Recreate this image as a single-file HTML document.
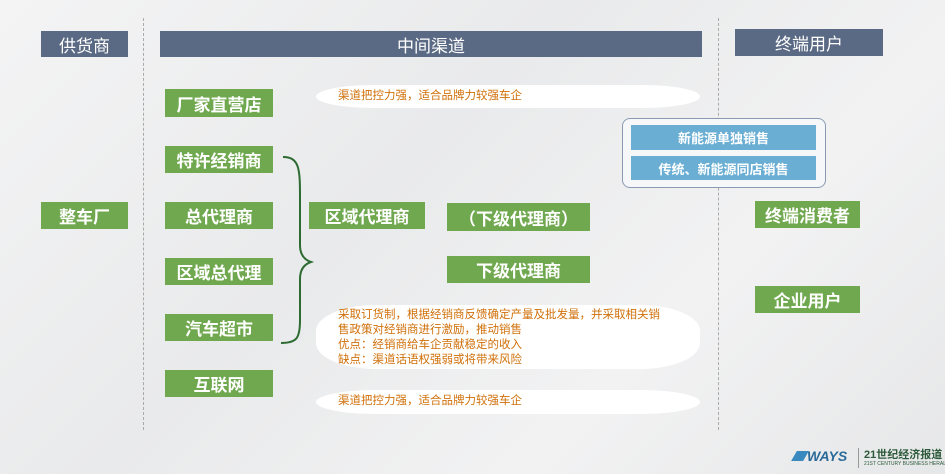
<!DOCTYPE html>
<html><head><meta charset="utf-8"><style>
*{margin:0;padding:0;box-sizing:border-box}
body{width:945px;height:474px;overflow:hidden;background:linear-gradient(135deg,#f4f4f5 0%,#e9eaeb 40%,#f2f2f3 70%,#e6e7e8 100%);font-family:"Liberation Sans","Noto Sans CJK SC",sans-serif;position:relative}
.a{position:absolute;white-space:nowrap}
.h{background:#5b6a84;color:#fff;font-size:17px;display:flex;align-items:center;justify-content:center}
.g{background:#70a84f;color:#fff;font-size:17px;font-weight:bold;display:flex;align-items:center;justify-content:center}
.b{background:#6aaed3;color:#fff;font-size:13px;font-weight:bold;display:flex;align-items:center;justify-content:center}
.w{background:#fff;border-radius:60px/12px;color:#d0700a;font-size:11.5px;line-height:15px}
.d{border-left:1px dashed #aaa;width:0}
</style></head><body>
<div class="a d" style="left:143px;top:18px;height:412px"></div>
<div class="a d" style="left:718px;top:18px;height:412px"></div>
<div class="a h" style="left:41px;top:31px;width:87px;height:26px">供货商</div>
<div class="a h" style="left:160px;top:31px;width:542px;height:26px">中间渠道</div>
<div class="a h" style="left:735px;top:29px;width:148px;height:27px">终端用户</div>

<div class="a g" style="left:165px;top:89px;width:108px;height:28px">厂家直营店</div>
<div class="a g" style="left:165px;top:146px;width:108px;height:27px">特许经销商</div>
<div class="a g" style="left:165px;top:202px;width:108px;height:27px">总代理商</div>
<div class="a g" style="left:165px;top:258px;width:108px;height:27px">区域总代理</div>
<div class="a g" style="left:165px;top:314px;width:108px;height:27px">汽车超市</div>
<div class="a g" style="left:165px;top:370px;width:108px;height:27px">互联网</div>
<div class="a g" style="left:41px;top:202px;width:87px;height:27px">整车厂</div>
<div class="a g" style="left:309px;top:202px;width:116px;height:27px">区域代理商</div>
<div class="a g" style="left:447px;top:203px;width:143px;height:28px">（下级代理商）</div>
<div class="a g" style="left:447px;top:256px;width:143px;height:27px">下级代理商</div>
<div class="a g" style="left:755px;top:201px;width:105px;height:27px">终端消费者</div>
<div class="a g" style="left:755px;top:286px;width:105px;height:27px">企业用户</div>

<div class="a" style="left:622px;top:118px;width:204px;height:70px;border:1.5px solid #8a9ab5;border-radius:8px;background:#f6f7f9"></div>
<div class="a b" style="left:631px;top:125px;width:185px;height:25px">新能源单独销售</div>
<div class="a b" style="left:631px;top:156px;width:185px;height:24px">传统、新能源同店销售</div>

<div class="a w" style="left:316px;top:85px;width:384px;height:23px;padding:4px 0 0 22px">渠道把控力强，适合品牌力较强车企</div>
<div class="a w" style="left:316px;top:305px;width:384px;height:64px;padding:3px 0 0 22px;border-radius:60px/26px">采取订货制，根据经销商反馈确定产量及批发量，并采取相关销<br>售政策对经销商进行激励，推动销售<br>优点：经销商给车企贡献稳定的收入<br>缺点：渠道话语权强弱或将带来风险</div>
<div class="a w" style="left:316px;top:390px;width:384px;height:24px;padding:4px 0 0 22px">渠道把控力强，适合品牌力较强车企</div>

<svg class="a" style="left:275px;top:150px" width="45" height="200"><path d="M8 7 C25 7 25 20 25 50 L25 95 C25 105 30 110 36 112 C30 114 25 119 25 129 L25 170 C25 188 22 193 6 193" fill="none" stroke="#2e6b32" stroke-width="2"/></svg>

<div class="a" style="left:807px;top:448px;font-size:14px;font-weight:bold;font-style:italic;color:#2a6a9a">WAYS</div>
<div class="a" style="left:794px;top:451px;width:12px;height:10px;background:#3a8ac0;transform:skewX(-30deg)"></div>
<div class="a" style="left:858px;top:448px;width:1px;height:20px;background:#999"></div>
<div class="a" style="left:864px;top:446px;font-size:11px;font-weight:bold;color:#2d5a3a">21世纪经济报道</div>
<div class="a" style="left:864px;top:461px;font-size:5px;color:#2d5a3a">21ST CENTURY BUSINESS HERALD</div>
</body></html>
